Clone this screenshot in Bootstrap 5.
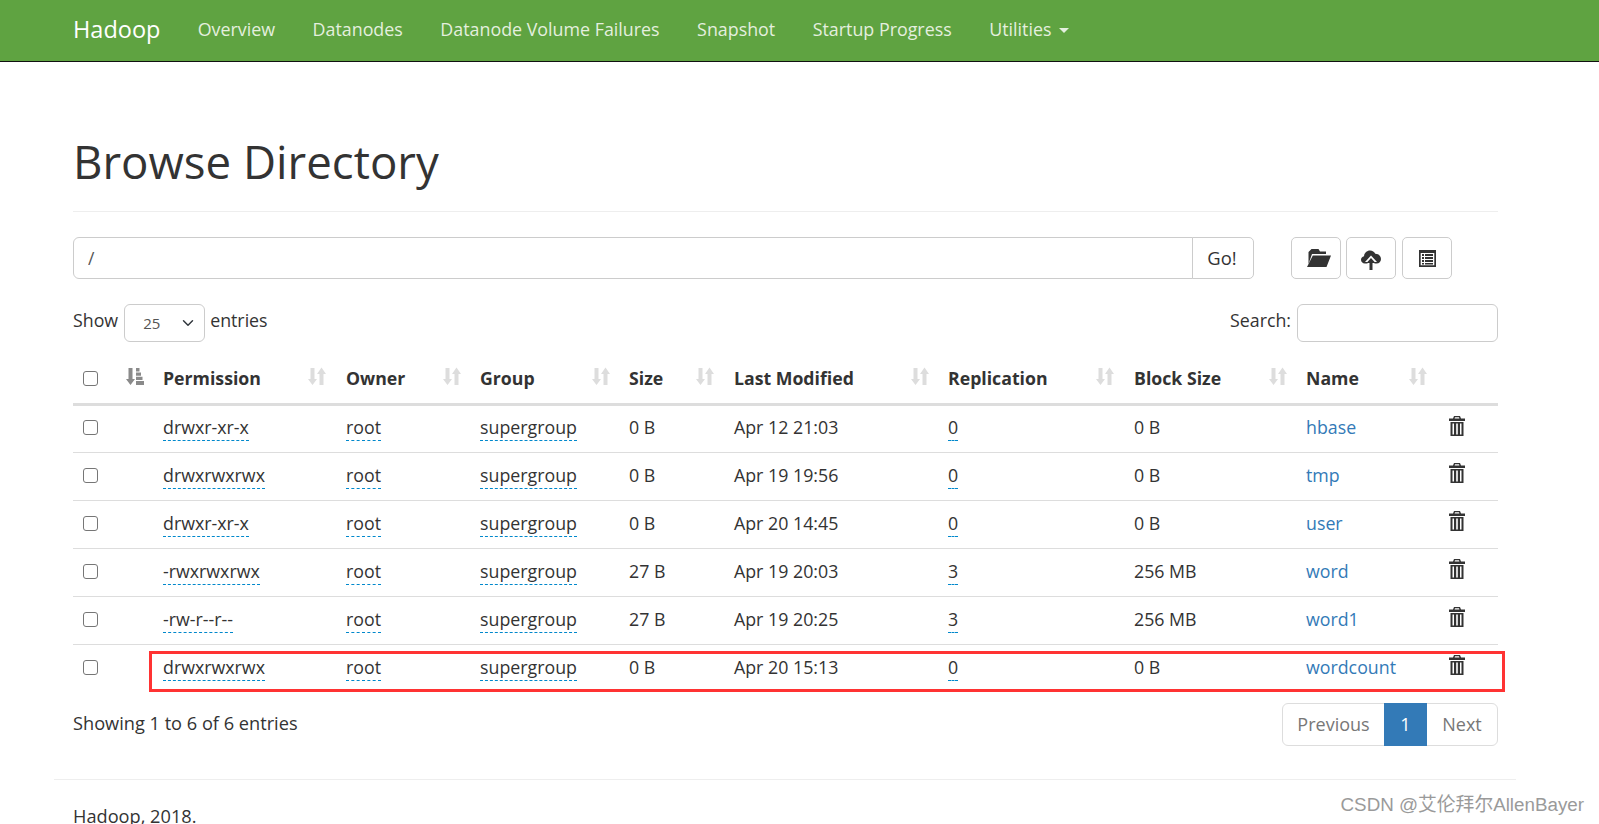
<!DOCTYPE html>
<html lang="en">
<head>
<meta charset="utf-8">
<title>Browsing HDFS</title>
<link href="https://cdn.jsdelivr.net/npm/bootstrap@5.3.0/dist/css/bootstrap.min.css" rel="stylesheet">
<style>
html,body{overflow:hidden;height:824px;}
body{font-family:"Open Sans","Noto Sans CJK SC",sans-serif;font-size:17.8px;color:#333;line-height:1.43;position:relative;}
.hd-nav{background:#5fa341;height:62px;border-bottom:1px solid #111;padding:0 0 2px;}
.hd-inner{width:1462px;margin-left:54px;padding:0 18px 0 19px;}
.hd-nav .navbar-brand{color:#fff;font-size:23.5px;padding:0;margin:0 18.500px 0 0;}
.navbar-expand .navbar-nav .nav-link.hd-item{color:#e4efdf;padding:0 18.75px;font-size:17.85px;}
.caret-d{display:inline-block;border-top:5px solid #e4efdf;border-left:5px solid transparent;border-right:5px solid transparent;vertical-align:middle;margin-left:3px;}
.hd-title{font-size:45.6px;font-weight:400;line-height:1.1;margin:74px 0 0;padding:0;border-bottom:1px solid #eee;color:#333;height:76px;}
.path-row{margin-top:25px;height:42px;}
.path-group{width:1181px;}
.path-group .form-control{height:42px;font-size:17.5px;color:#555;border-color:#ccc;padding:6px 14px;}
.path-group .btn,.tool-btn{height:42px;font-size:18.4px;color:#333;background:#fff;border:1px solid #ccc;border-radius:5px;}
.path-group .btn{width:62px;padding:0 2px 0 0;}
.tool-group{margin-left:37px;gap:5px;}
.tool-btn{width:50px;padding:0;display:flex;align-items:center;justify-content:center;}
.tool-last{margin-left:1px;}
.ic-folder{margin-left:5px;}
.ic-cloud{margin-top:3px;}
.len-row{margin-top:25px;height:38px;}
.len-txt{padding-top:4px;}
.len-sel{width:81px;height:38px;font-size:15px;color:#555;border-color:#ccc;padding:4px 24px 4px 18px;background-position:right 8px center;margin:0 5px 0 6px;}
.search-in{width:201px;height:38px;border-color:#ccc;margin-left:6px;}
.tbl-wrap{position:relative;margin-top:13px;}
.hd-table{table-layout:fixed;width:1425px;margin:0;color:#333;}
.hd-table th,.hd-table td{padding:0 10px;vertical-align:middle;border-bottom:1px solid #ddd;color:#333;white-space:nowrap;}
.hd-table thead th{height:49px;border-bottom:3px solid #ddd;font-weight:700;position:relative;font-size:17.7px;}
.hd-table tbody td{height:48px;padding-bottom:1px;}
.hd-table tbody tr:last-child td{border-bottom:0;}
.form-check-input.hd-check{width:15px;height:15px;margin:0 0 1px;border:1.5px solid #767676;border-radius:3px;display:block;}
.c0{width:43px}.c1{width:37px}.c2{width:183px}.c3{width:134px}.c4{width:149px}.c5{width:105px}.c6{width:214px}.c7{width:186px}.c8{width:172px}.c9{width:143px}.c10{width:59px}
.perm{border-bottom:1px dashed #08c;color:#333;text-decoration:none;padding-bottom:1px;}
.hd-link{color:#337ab7;text-decoration:none;}
.sort-ic{position:absolute;top:12px;width:18px;height:18px;color:#ddd;}
.sort-ic.s-first{left:10px;color:#8a8a8a}
.sort-ic.s2{left:155px}.sort-ic.s3{left:107px}.sort-ic.s4{left:122px}.sort-ic.s5{left:77px}.sort-ic.s6{left:187px}.sort-ic.s7{left:158px}.sort-ic.s8{left:145px}.sort-ic.s9{left:113px}
.trash-ic{width:16px;height:20px;display:block;margin-top:-5px;color:#333;}
.hi-box{position:absolute;left:76px;bottom:0;width:1356px;height:41px;border:3px solid #f33;pointer-events:none;}
.foot-row{margin-top:7px;height:56px;}
.foot-note{font-size:18.2px;padding-top:11px;}
.foot-row .pagination{margin:4px 0 0;--bs-pagination-font-size:18px;}
.foot-row .page-link{padding:0;height:43px;line-height:41px;text-align:center;color:#777;border-color:#ddd;}
.pg-prev{width:103px}.pg-one{width:43px}.pg-next{width:72px}
.foot-row .page-item.active .page-link{background:#337ab7;border-color:#337ab7;color:#fff;}
.foot-line{width:1462px;margin:24px 0 0 54px;padding:23px 19px 0;border-top:1px solid #eee;font-size:18.2px;}
.mark-wm{position:absolute;right:15px;bottom:7px;color:#9a9a9a;font-family:"Liberation Sans","Noto Sans CJK SC",sans-serif;font-size:18.8px;line-height:1.2;}
</style>
</head>
<body>
<svg width="0" height="0" class="d-none">
  <symbol id="i-sort" viewBox="0 0 18 18"><path fill="currentColor" d="M2.500 1h4v11H9L4.500 18 0 12h2.500zM15.500 18h-4V7H9L13.500.5 18 7h-2.500z"/></symbol>
  <symbol id="i-attr" viewBox="0 0 18 18"><path fill="currentColor" d="M2.500 1h4v11H9L4.500 18 0 12h2.500zM10 1h3.500v3.500H10zM10 5.500h5v3.200h-5zM10 9.800h6.500V13H10zM10 14h8v4h-8z"/></symbol>
  <symbol id="i-trash" viewBox="0 0 16 20"><path fill="currentColor" fill-rule="evenodd" d="M5 0h6l1 2.500h4V5H0V2.500h4zM6 1.200 5.600 2.500h4.800L10 1.200zM1.500 6h13v14h-13zM3.500 7.500v11h1.500v-11zM7.200 7.500v11h1.600v-11zM11 7.500v11h1.500v-11z"/></symbol>
  <symbol id="i-folder" viewBox="0 0 24 18"><path fill="currentColor" d="M4.500 0h7l1.500 2.500h6V5H5L1.500 15V3zM5.800 6.500H24L19.500 18H0z"/></symbol>
  <symbol id="i-cloud" viewBox="0 0 20 20"><path fill="currentColor" d="M4 13.500C1.500 13.500 0 11.800 0 9.800 0 7.900 1.300 6.500 3 6.200 3.300 3 5.800.5 9 .5c2.500 0 4.400 1.300 5.300 3.300C17.500 3.800 20 6 20 9c0 2.600-1.800 4.500-4.500 4.500h-2V12H16l-6-6.500L4 12h2.500v1.500z"/><path fill="currentColor" d="M10 8l4.500 5h-3v7h-3v-7h-3z"/></symbol>
  <symbol id="i-list" viewBox="0 0 17 17"><path fill="currentColor" fill-rule="evenodd" d="M0 0h17v17H0zM1.700 3v12.300h13.600V3zM3 4h2v2H3zM6 4h8v2H6zM3 7h2v2H3zM6 7h8v2H6zM3 10h2v2H3zM6 10h8v2H6zM3 13h2v1.500H3zM6 13h8v1.500H6z"/></symbol>
</svg>

<nav class="navbar navbar-expand hd-nav">
  <div class="hd-inner d-flex align-items-center">
    <a class="navbar-brand" href="#">Hadoop</a>
    <ul class="navbar-nav">
      <li class="nav-item"><a class="nav-link hd-item" href="#">Overview</a></li>
      <li class="nav-item"><a class="nav-link hd-item" href="#">Datanodes</a></li>
      <li class="nav-item"><a class="nav-link hd-item" href="#">Datanode Volume Failures</a></li>
      <li class="nav-item"><a class="nav-link hd-item" href="#">Snapshot</a></li>
      <li class="nav-item"><a class="nav-link hd-item" href="#">Startup Progress</a></li>
      <li class="nav-item"><a class="nav-link hd-item" href="#">Utilities <span class="caret-d"></span></a></li>
    </ul>
  </div>
</nav>

<main class="hd-inner">
  <h1 class="hd-title">Browse Directory</h1>

  <div class="d-flex path-row">
    <div class="input-group path-group">
      <input type="text" class="form-control" value="/">
      <button class="btn" type="button">Go!</button>
    </div>
    <div class="d-flex tool-group">
      <button class="tool-btn" type="button" aria-label="Create directory"><svg class="ic-folder" width="24" height="18"><use href="#i-folder"/></svg></button>
      <button class="tool-btn" type="button" aria-label="Upload"><svg class="ic-cloud" width="20" height="20"><use href="#i-cloud"/></svg></button>
      <button class="tool-btn tool-last" type="button" aria-label="Cut"><svg width="17" height="17"><use href="#i-list"/></svg></button>
    </div>
  </div>

  <div class="d-flex justify-content-between len-row">
    <div class="d-flex align-items-start">
      <span class="len-txt">Show</span>
      <select class="form-select len-sel"><option>25</option></select>
      <span class="len-txt">entries</span>
    </div>
    <div class="d-flex align-items-start">
      <span class="len-txt">Search:</span>
      <input type="search" class="form-control search-in">
    </div>
  </div>

  <div class="tbl-wrap">
    <table class="table hd-table">
      <colgroup><col class="c0"><col class="c1"><col class="c2"><col class="c3"><col class="c4"><col class="c5"><col class="c6"><col class="c7"><col class="c8"><col class="c9"><col class="c10"></colgroup>
      <thead>
        <tr>
          <th><input class="form-check-input hd-check" type="checkbox"></th>
          <th><svg class="sort-ic s-first"><use href="#i-attr"/></svg></th>
          <th>Permission<svg class="sort-ic s2"><use href="#i-sort"/></svg></th>
          <th>Owner<svg class="sort-ic s3"><use href="#i-sort"/></svg></th>
          <th>Group<svg class="sort-ic s4"><use href="#i-sort"/></svg></th>
          <th>Size<svg class="sort-ic s5"><use href="#i-sort"/></svg></th>
          <th>Last Modified<svg class="sort-ic s6"><use href="#i-sort"/></svg></th>
          <th>Replication<svg class="sort-ic s7"><use href="#i-sort"/></svg></th>
          <th>Block Size<svg class="sort-ic s8"><use href="#i-sort"/></svg></th>
          <th>Name<svg class="sort-ic s9"><use href="#i-sort"/></svg></th>
          <th></th>
        </tr>
      </thead>
      <tbody>
        <tr><td><input class="form-check-input hd-check" type="checkbox"></td><td></td><td><a class="perm" href="#">drwxr-xr-x</a></td><td><a class="perm" href="#">root</a></td><td><a class="perm" href="#">supergroup</a></td><td>0 B</td><td>Apr 12 21:03</td><td><a class="perm" href="#">0</a></td><td>0 B</td><td><a class="hd-link" href="#">hbase</a></td><td><svg class="trash-ic"><use href="#i-trash"/></svg></td></tr>
        <tr><td><input class="form-check-input hd-check" type="checkbox"></td><td></td><td><a class="perm" href="#">drwxrwxrwx</a></td><td><a class="perm" href="#">root</a></td><td><a class="perm" href="#">supergroup</a></td><td>0 B</td><td>Apr 19 19:56</td><td><a class="perm" href="#">0</a></td><td>0 B</td><td><a class="hd-link" href="#">tmp</a></td><td><svg class="trash-ic"><use href="#i-trash"/></svg></td></tr>
        <tr><td><input class="form-check-input hd-check" type="checkbox"></td><td></td><td><a class="perm" href="#">drwxr-xr-x</a></td><td><a class="perm" href="#">root</a></td><td><a class="perm" href="#">supergroup</a></td><td>0 B</td><td>Apr 20 14:45</td><td><a class="perm" href="#">0</a></td><td>0 B</td><td><a class="hd-link" href="#">user</a></td><td><svg class="trash-ic"><use href="#i-trash"/></svg></td></tr>
        <tr><td><input class="form-check-input hd-check" type="checkbox"></td><td></td><td><a class="perm" href="#">-rwxrwxrwx</a></td><td><a class="perm" href="#">root</a></td><td><a class="perm" href="#">supergroup</a></td><td>27 B</td><td>Apr 19 20:03</td><td><a class="perm" href="#">3</a></td><td>256 MB</td><td><a class="hd-link" href="#">word</a></td><td><svg class="trash-ic"><use href="#i-trash"/></svg></td></tr>
        <tr><td><input class="form-check-input hd-check" type="checkbox"></td><td></td><td><a class="perm" href="#">-rw-r--r--</a></td><td><a class="perm" href="#">root</a></td><td><a class="perm" href="#">supergroup</a></td><td>27 B</td><td>Apr 19 20:25</td><td><a class="perm" href="#">3</a></td><td>256 MB</td><td><a class="hd-link" href="#">word1</a></td><td><svg class="trash-ic"><use href="#i-trash"/></svg></td></tr>
        <tr><td><input class="form-check-input hd-check" type="checkbox"></td><td></td><td><a class="perm" href="#">drwxrwxrwx</a></td><td><a class="perm" href="#">root</a></td><td><a class="perm" href="#">supergroup</a></td><td>0 B</td><td>Apr 20 15:13</td><td><a class="perm" href="#">0</a></td><td>0 B</td><td><a class="hd-link" href="#">wordcount</a></td><td><svg class="trash-ic"><use href="#i-trash"/></svg></td></tr>
      </tbody>
    </table>
    <div class="hi-box"></div>
  </div>

  <div class="d-flex justify-content-between foot-row">
    <div class="foot-note">Showing 1 to 6 of 6 entries</div>
    <ul class="pagination">
      <li class="page-item"><a class="page-link pg-prev" href="#">Previous</a></li>
      <li class="page-item active"><a class="page-link pg-one" href="#">1</a></li>
      <li class="page-item"><a class="page-link pg-next" href="#">Next</a></li>
    </ul>
  </div>
</main>

<footer class="foot-line">Hadoop, 2018.</footer>
<div class="mark-wm">CSDN @艾伦拜尔AllenBayer</div>
</body>
</html>
